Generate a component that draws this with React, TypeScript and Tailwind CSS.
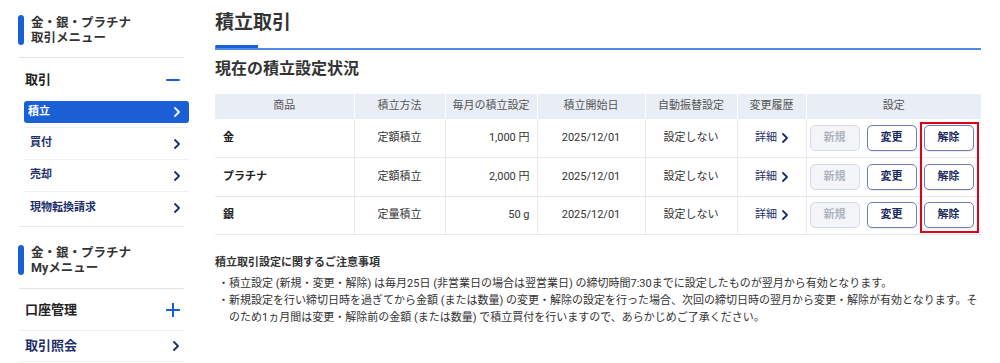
import React from "react";

type Row = {
  name: string;
  method: string;
  amount: string;
  start: string;
  auto: string;
};

const ROWS: Row[] = [
  { name: "金", method: "定額積立", amount: "1,000 円", start: "2025/12/01", auto: "設定しない" },
  { name: "プラチナ", method: "定額積立", amount: "2,000 円", start: "2025/12/01", auto: "設定しない" },
  { name: "銀", method: "定量積立", amount: "50 g", start: "2025/12/01", auto: "設定しない" },
];

const SUB_ITEMS = ["買付", "売却", "現物転換請求"];

function Chevron({ className = "" }: { className?: string }) {
  return (
    <svg width="6" height="10" viewBox="0 0 6 10" fill="none" className={className}>
      <path
        d="M1 1l4 4-4 4"
        stroke="currentColor"
        strokeWidth="1.8"
        strokeLinecap="round"
        strokeLinejoin="round"
      />
    </svg>
  );
}

function SectionTitle({ lines }: { lines: string[] }) {
  return (
    <div className="ml-[18px] flex">
      <div className="w-[6px] rounded-[3px] bg-[#1a5fd6]" />
      <div className="pl-[7px] text-[12.5px] font-bold leading-[15px] text-[#333]">
        {lines.map((l) => (
          <div key={l}>{l}</div>
        ))}
      </div>
    </div>
  );
}

function Sidebar() {
  return (
    <aside className="w-[200px] shrink-0 pt-[15px]">
      <SectionTitle lines={["金・銀・プラチナ", "取引メニュー"]} />
      <div className="mt-[12px] ml-[19px] h-px w-[165px] bg-[#dfe3ea]" />
      <div className="ml-[19px] flex h-[43px] w-[165px] items-center justify-between pl-[6px] pr-[4px]">
        <span className="text-[13px] font-bold text-[#222]">取引</span>
        <span className="h-[2px] w-[14px] rounded bg-[#1a5fd6]" />
      </div>

      <div className="ml-[24px] w-[165px]">
        <div className="border-b border-[#eef1f5] pb-[4px]">
          <div className="flex h-[22px] items-center justify-between rounded-[3px] bg-[#1a5fd6] pl-[4px] pr-[9px] text-[11px] font-bold text-white">
            <span>積立</span>
            <Chevron />
          </div>
        </div>
        {SUB_ITEMS.map((item, i) => (
          <div
            key={item}
            className={`flex h-[32px] items-center justify-between pl-[6px] pr-[9px] text-[11px] font-bold text-[#1e2f6b] ${
              i < SUB_ITEMS.length - 1 ? "border-b border-[#eef1f5]" : ""
            }`}
          >
            <span>{item}</span>
            <Chevron />
          </div>
        ))}
      </div>
      <div className="mt-[2px] ml-[19px] h-px w-[165px] bg-[#e4e8ef]" />

      <div className="mt-[18px]">
        <SectionTitle lines={["金・銀・プラチナ", "Myメニュー"]} />
      </div>
      <div className="mt-[13px] ml-[19px] h-px w-[165px] bg-[#dfe3ea]" />
      <div className="ml-[19px] w-[165px]">
        <div className="flex h-[42px] items-center justify-between border-b border-[#eef1f5] pl-[6px] pr-[4px]">
          <span className="text-[13px] font-bold text-[#222]">口座管理</span>
          <svg width="14" height="14" viewBox="0 0 14 14">
            <path d="M7 0v14M0 7h14" stroke="#1a5fd6" strokeWidth="2" />
          </svg>
        </div>
        <div className="flex h-[31px] items-center justify-between border-b border-[#eef1f5] pl-[6px] pr-[5px]">
          <span className="text-[13px] font-bold text-[#1e2f6b]">取引照会</span>
          <Chevron className="text-[#1e2f6b]" />
        </div>
      </div>
    </aside>
  );
}

function Btn({ label, disabled = false }: { label: string; disabled?: boolean }) {
  return (
    <span
      className={
        disabled
          ? "flex h-[26px] w-[50px] items-center justify-center rounded-[5px] border border-[#d6dbe3] bg-[#f3f5f8] text-[11px] font-bold text-[#aeb4be]"
          : "flex h-[26px] w-[50px] items-center justify-center rounded-[5px] border border-[#6b7cb8] bg-white text-[11px] font-bold text-[#1b2a5e] shadow-[0_1px_1px_rgba(0,0,0,0.08)]"
      }
    >
      {label}
    </span>
  );
}

function SettingsTable() {
  const th = "border-l border-white font-normal text-[#555] first:border-l-0";
  const td = "border-l border-[#e6e9ef] first:border-l-0";
  return (
    <div className="relative mt-[14px]">
      <table className="w-full table-fixed border-collapse text-[11px] text-[#333]">
        <colgroup>
          <col className="w-[139px]" />
          <col className="w-[91px]" />
          <col className="w-[92px]" />
          <col className="w-[108px]" />
          <col className="w-[92px]" />
          <col className="w-[69px]" />
          <col />
        </colgroup>
        <thead>
          <tr className="h-[25px] bg-[#e9eef6]">
            <th className={th}>商品</th>
            <th className={th}>積立方法</th>
            <th className={th}>毎月の積立設定</th>
            <th className={th}>積立開始日</th>
            <th className={th}>自動振替設定</th>
            <th className={th}>変更履歴</th>
            <th className={th}>設定</th>
          </tr>
        </thead>
        <tbody>
          {ROWS.map((r) => (
            <tr key={r.name} className="h-[38.5px] border-b border-[#e6e9ef]">
              <td className={`${td} pl-[8px] font-bold text-[#222]`}>{r.name}</td>
              <td className={`${td} text-center`}>{r.method}</td>
              <td className={`${td} pr-[7px] text-right`}>{r.amount}</td>
              <td className={`${td} text-center`}>{r.start}</td>
              <td className={`${td} text-center`}>{r.auto}</td>
              <td className={td}>
                <span className="flex items-center justify-center gap-[5px] text-[#1e2f6b]">
                  詳細
                  <Chevron />
                </span>
              </td>
              <td className={td}>
                <div className="flex items-center gap-[7px] pl-[3px]">
                  <Btn label="新規" disabled />
                  <Btn label="変更" />
                  <Btn label="解除" />
                </div>
              </td>
            </tr>
          ))}
        </tbody>
      </table>
      <div className="pointer-events-none absolute top-[28px] left-[705px] h-[111px] w-[59px] border-2 border-[#e0001b]" />
    </div>
  );
}

export default function App() {
  return (
    <div className="flex h-[363px] w-[1000px] overflow-hidden bg-white font-[Roboto,'Noto_Sans_CJK_JP',sans-serif]">
      <Sidebar />
      <main className="ml-[15px] w-[766px]">
        <h1 className="pt-[10px] text-[19px] leading-[26px] font-bold text-[#333]">積立取引</h1>
        <div className="mt-[9px] flex flex-col">
          <div className="h-[3px] w-[43px] rounded-l-[2px] bg-[#1a5fd6]" />
          <div className="h-[2px] w-full bg-[#4d8ae6]" />
        </div>
        <h2 className="mt-[8px] text-[16px] leading-[22px] font-bold text-[#333]">現在の積立設定状況</h2>
        <SettingsTable />
        <div className="mt-[18.5px] text-[11px] leading-[17px] text-[#333]">
          <p className="font-bold">積立取引設定に関するご注意事項</p>
          <ul className="mt-[4px]">
            <li className="flex">
              <span className="w-[14px] shrink-0 pl-[3px]">・</span>
              <span>
                積立設定 (新規・変更・解除) は毎月25日 (非営業日の場合は翌営業日) の締切時間7:30までに設定したものが翌月から有効となります。
              </span>
            </li>
            <li className="flex">
              <span className="w-[14px] shrink-0 pl-[3px]">・</span>
              <span>
                新規設定を行い締切日時を過ぎてから金額 (または数量) の変更・解除の設定を行った場合、次回の締切日時の翌月から変更・解除が有効となります。そのため1ヵ月間は変更・解除前の金額 (または数量) で積立買付を行いますので、あらかじめご了承ください。
              </span>
            </li>
          </ul>
        </div>
      </main>
    </div>
  );
}
